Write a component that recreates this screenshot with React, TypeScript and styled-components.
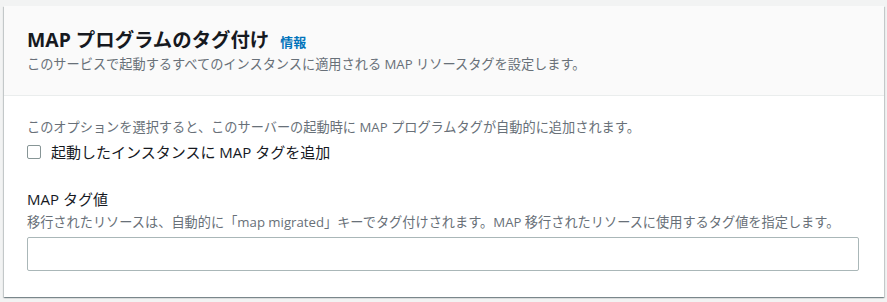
import styled, { createGlobalStyle } from "styled-components";

const GlobalStyle = createGlobalStyle`
  * {
    box-sizing: border-box;
  }
  body {
    margin: 0;
    background-color: #f2f3f3;
    font-family: "Open Sans", "Noto Sans CJK JP", sans-serif;
    color: #16191f;
  }
`;

export default function App() {
  return (
    <>
      <GlobalStyle />
      <Page>
        <Card>
          <CardHeader>
            <TitleRow>
              <Title>MAP プログラムのタグ付け</Title>
              <InfoLink>情報</InfoLink>
            </TitleRow>
            <Description>
              このサービスで起動するすべてのインスタンスに適用される MAP
              リソースタグを設定します。
            </Description>
          </CardHeader>
          <CardBody>
            <Field>
              <Hint>
                このオプションを選択すると、このサーバーの起動時に MAP
                プログラムタグが自動的に追加されます。
              </Hint>
              <CheckRow>
                <Checkbox type="checkbox" />
                <CheckLabel>起動したインスタンスに MAP タグを追加</CheckLabel>
              </CheckRow>
            </Field>
            <Field>
              <FieldLabel>MAP タグ値</FieldLabel>
              <Hint>
                移行されたリソースは、自動的に「map migrated」キーでタグ付けされます。MAP
                移行されたリソースに使用するタグ値を指定します。
              </Hint>
              <TextInput />
            </Field>
          </CardBody>
        </Card>
      </Page>
    </>
  );
}

const Page = styled.div`
  width: 887px;
  height: 302px;
  padding: 6px 3px 5px 4px;
`;

const Card = styled.section`
  height: 100%;
  background-color: #ffffff;
  box-shadow: 0 1px 1px 0 rgba(0, 28, 36, 0.3),
    1px 1px 1px 0 rgba(0, 28, 36, 0.15), -1px 1px 1px 0 rgba(0, 28, 36, 0.15);
  display: flex;
  flex-direction: column;
`;

const CardHeader = styled.div`
  height: 90px;
  padding: 22px 23px 0;
  background-color: #fafafa;
  border-bottom: 1px solid #eaeded;
`;

const TitleRow = styled.div`
  display: flex;
  align-items: baseline;
  gap: 11px;
`;

const Title = styled.h2`
  margin: 0;
  font-size: 19.4px;
  font-weight: 700;
  line-height: 24px;
  color: #16191f;
`;

const InfoLink = styled.a`
  font-size: 13px;
  font-weight: 700;
  color: #0073bb;
  cursor: pointer;
`;

const Description = styled.p`
  margin: 3px 0 0;
  font-size: 13.2px;
  line-height: 18px;
  color: #687078;
`;

const CardBody = styled.div`
  padding: 22px 23px 0;
  display: flex;
  flex-direction: column;
  gap: 25px;
`;

const Field = styled.div`
  display: flex;
  flex-direction: column;
`;

const FieldLabel = styled.label`
  font-size: 15px;
  line-height: 22px;
  color: #16191f;
  margin-bottom: 3px;
`;

const Hint = styled.p`
  margin: 0;
  font-size: 13.2px;
  line-height: 18px;
  color: #687078;
`;

const CheckRow = styled.label`
  display: flex;
  align-items: center;
  gap: 10px;
  margin-top: 5px;
`;

const Checkbox = styled.input`
  appearance: none;
  margin: 0;
  width: 14px;
  height: 14px;
  border: 1px solid #879596;
  border-radius: 2px;
  background-color: #ffffff;
`;

const CheckLabel = styled.span`
  font-size: 15px;
  line-height: 22px;
  color: #16191f;
`;

const TextInput = styled.input`
  margin-top: 6px;
  width: 832px;
  height: 34px;
  border: 1px solid #aab7b8;
  border-radius: 2px;
  outline: 0;
  padding: 0 10px;
  font-size: 14px;
`;
